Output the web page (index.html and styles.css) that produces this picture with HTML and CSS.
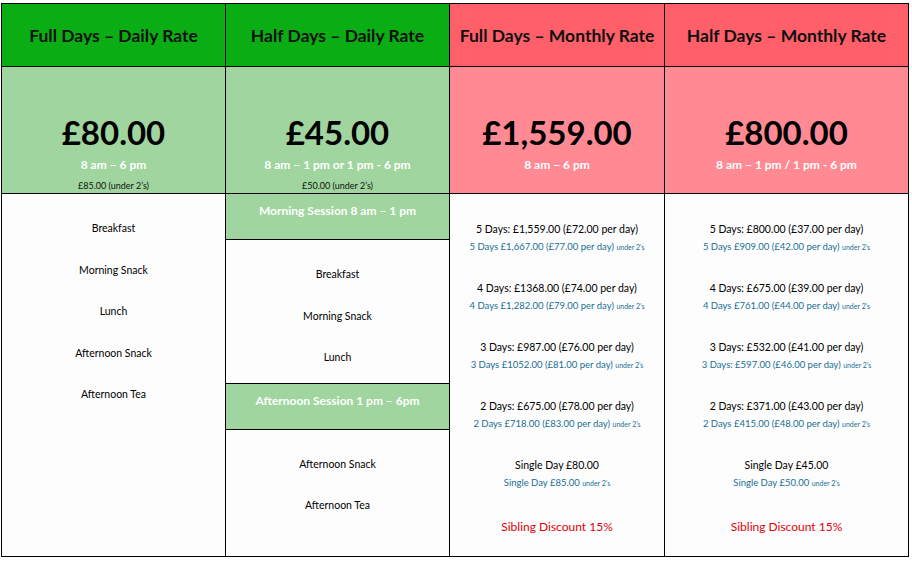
FILE: index.html
```html
<!DOCTYPE html>
<html lang="en">
<head>
<meta charset="utf-8">
<title>Fees</title>
<link rel="stylesheet" href="styles.css">
</head>
<body>
<div class="wrap">
<table class="fees">
  <colgroup>
    <col class="c1"><col class="c2"><col class="c3"><col class="c4">
  </colgroup>
  <tr class="head">
    <th class="g">Full Days – Daily Rate</th>
    <th class="g">Half Days – Daily Rate</th>
    <th class="r">Full Days – Monthly Rate</th>
    <th class="r">Half Days – Monthly Rate</th>
  </tr>
  <tr class="price">
    <td class="lg">
      <div class="big">£80.00</div>
      <div class="hours">8 am – 6 pm</div>
      <div class="under">£85.00 (under 2’s)</div>
    </td>
    <td class="lg">
      <div class="big">£45.00</div>
      <div class="hours">8 am – 1 pm or 1 pm - 6 pm</div>
      <div class="under">£50.00 (under 2’s)</div>
    </td>
    <td class="lr">
      <div class="big">£1,559.00</div>
      <div class="hours">8 am – 6 pm</div>
    </td>
    <td class="lr">
      <div class="big">£800.00</div>
      <div class="hours">8 am – 1 pm / 1 pm - 6 pm</div>
    </td>
  </tr>
  <tr class="body">
    <td>
      <ul class="items">
        <li>Breakfast</li>
        <li>Morning Snack</li>
        <li>Lunch</li>
        <li>Afternoon Snack</li>
        <li>Afternoon Tea</li>
      </ul>
    </td>
    <td class="split">
      <div class="stack">
        <div class="session">Morning Session 8 am – 1 pm</div>
        <ul class="items am">
          <li>Breakfast</li>
          <li>Morning Snack</li>
          <li>Lunch</li>
        </ul>
        <div class="session">Afternoon Session 1 pm – 6pm</div>
        <ul class="items pm">
          <li>Afternoon Snack</li>
          <li>Afternoon Tea</li>
        </ul>
      </div>
    </td>
    <td>
      <div class="rates">
        <div class="grp"><p class="main">5 Days: £1,559.00 (£72.00 per day)</p><p class="alt">5 Days £1,667.00 (£77.00 per day) <small>under 2’s</small></p></div>
        <div class="grp"><p class="main">4 Days: £1368.00 (£74.00 per day)</p><p class="alt">4 Days £1,282.00 (£79.00 per day) <small>under 2’s</small></p></div>
        <div class="grp"><p class="main">3 Days: £987.00 (£76.00 per day)</p><p class="alt">3 Days £1052.00 (£81.00 per day) <small>under 2’s</small></p></div>
        <div class="grp"><p class="main">2 Days: £675.00 (£78.00 per day)</p><p class="alt">2 Days £718.00 (£83.00 per day) <small>under 2’s</small></p></div>
        <div class="grp"><p class="main">Single Day £80.00</p><p class="alt">Single Day £85.00 <small>under 2’s</small></p></div>
        <p class="sib">Sibling Discount 15%</p>
      </div>
    </td>
    <td>
      <div class="rates">
        <div class="grp"><p class="main">5 Days: £800.00 (£37.00 per day)</p><p class="alt">5 Days £909.00 (£42.00 per day) <small>under 2’s</small></p></div>
        <div class="grp"><p class="main">4 Days: £675.00 (£39.00 per day)</p><p class="alt">4 Days £761.00 (£44.00 per day) <small>under 2’s</small></p></div>
        <div class="grp"><p class="main">3 Days: £532.00 (£41.00 per day)</p><p class="alt">3 Days: £597.00 (£46.00 per day) <small>under 2’s</small></p></div>
        <div class="grp"><p class="main">2 Days: £371.00 (£43.00 per day)</p><p class="alt">2 Days £415.00 (£48.00 per day) <small>under 2’s</small></p></div>
        <div class="grp"><p class="main">Single Day £45.00</p><p class="alt">Single Day £50.00 <small>under 2’s</small></p></div>
        <p class="sib">Sibling Discount 15%</p>
      </div>
    </td>
  </tr>
</table>
</div>
</body>
</html>
```

FILE: styles.css
```css
html, body {
  margin: 0;
  padding: 0;
  background: #ffffff;
}
body {
  font-family: Lato, "Noto Sans", sans-serif;
  color: #000;
}
.wrap {
  padding: 3px 0 0 1px;
}
.fees {
  border-collapse: collapse;
  table-layout: fixed;
  width: 907px;
}
.c1 { width: 224px; }
.c2 { width: 224px; }
.c3 { width: 215px; }
.c4 { width: 244px; }
.fees th, .fees td {
  border: 1px solid #000;
  padding: 0;
  text-align: center;
}
.head th {
  height: 62px;
  font-size: 17.5px;
  font-weight: 700;
  color: #111;
  vertical-align: middle;
}
.head th.g { background: #0aad13; }
.head th.r { background: #ff5f69; }
.price td {
  height: 127px;
  vertical-align: top;
  padding-top: 45px;
  box-sizing: border-box;
}
.price td.lg { background: #a0d5a0; }
.price td.lr { background: #ff8a94; }
.big {
  font-size: 33px;
  font-weight: 700;
  line-height: 40px;
  color: #000;
}
.hours {
  font-size: 12px;
  font-weight: 700;
  color: #fff;
  line-height: 16px;
  margin-top: 5px;
}
.under {
  font-size: 9px;
  line-height: 12px;
  margin-top: 7px;
  color: #111;
}
.body td {
  height: 362px;
  vertical-align: top;
  background: #fdfdfd;
}
.items {
  list-style: none;
  margin: 0;
  padding: 14px 0 0;
  font-size: 10.5px;
}
.items li {
  line-height: 41.5px;
}
.body td.split {
  padding: 0;
}
.stack {
  display: flex;
  flex-direction: column;
}
.session {
  background: #a0d5a0;
  color: #fff;
  font-size: 12px;
  font-weight: 700;
  height: 46px;
  box-sizing: border-box;
  padding-top: 9px;
  line-height: 16px;
  border-bottom: 1px solid #000;
}
.items.am {
  padding-bottom: 4px;
  border-bottom: 1px solid #000;
}
.rates {
  padding-top: 27px;
  display: flex;
  flex-direction: column;
}
.grp {
  height: 59px;
}
.rates p {
  margin: 0;
}
.main {
  font-size: 10.5px;
  line-height: 16px;
  color: #000;
}
.alt {
  font-size: 9.5px;
  line-height: 14px;
  margin-top: 3px !important;
  color: #1a6e94;
}
.alt small {
  font-size: 7px;
}
.sib {
  font-size: 12px;
  line-height: 16px;
  color: #e0000a;
  margin-top: 3px !important;
}
```
